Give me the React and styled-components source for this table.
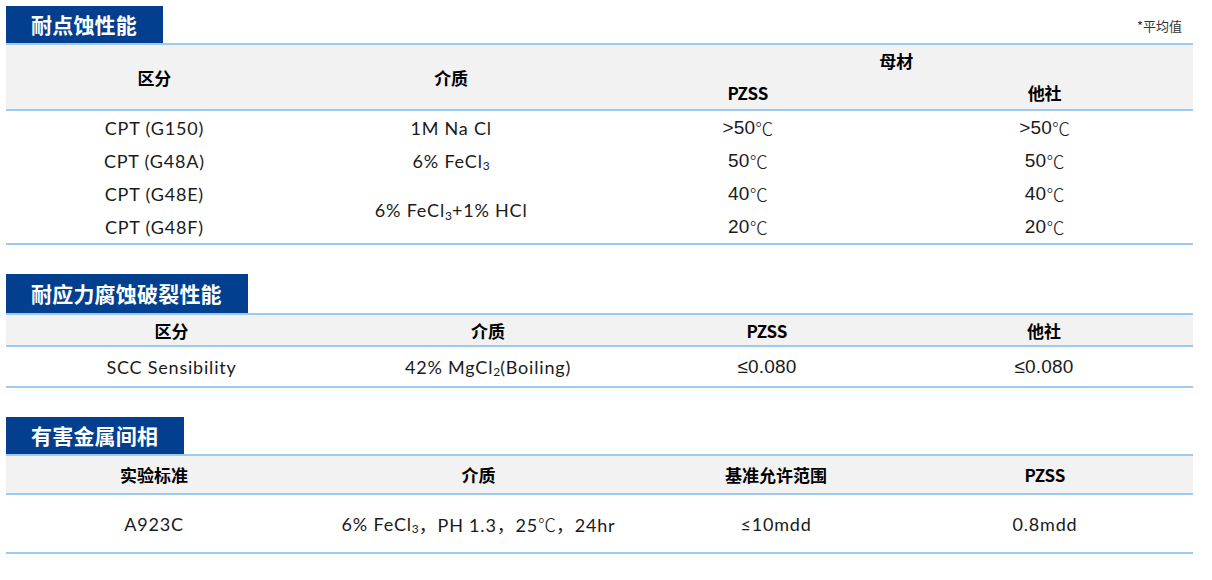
import React from "react";
import styled, { createGlobalStyle } from "styled-components";

const Global = createGlobalStyle`
  html, body { margin: 0; padding: 0; background: #ffffff; }
  body { font-family: "Lato", "Noto Sans CJK SC", sans-serif; color: #1a1a1a; }
`;

const LINE = "#9dcbef";
const BLUE = "#023f8f";
const CJK = `"Noto Sans CJK SC", "Noto Sans", sans-serif`;

const Page = styled.div`
  width: 1187px;
  padding: 6px 0 0 6px;
`;

const Section = styled.section`
  & + & { margin-top: 29px; }
`;

const TitleBar = styled.div`
  display: flex;
  justify-content: space-between;
  align-items: flex-end;
`;

const Title = styled.h2`
  margin: 0;
  height: ${(p) => p.$h}px;
  line-height: ${(p) => p.$h}px;
  padding: 0 26px 0 25px;
  background: ${BLUE};
  color: #ffffff;
  font-family: ${CJK};
  font-weight: 700;
  font-size: 21px;
  letter-spacing: 0.2px;
`;

const Note = styled.span`
  font-family: ${CJK};
  font-size: 13px;
  color: #333333;
  padding: 0 11px 8px 0;
`;

const Grid = styled.div`
  display: grid;
  grid-template-columns: ${(p) => p.$cols || "repeat(4, 1fr)"};
  grid-template-rows: ${(p) => p.$rows};
`;

const Head = styled(Grid)`
  background: #f2f2f2;
  border-top: 2px solid ${LINE};
  border-bottom: 2px solid ${LINE};
`;

const Body = styled(Grid)`
  border-bottom: 2px solid ${LINE};
`;

const Cell = styled.div`
  display: flex;
  align-items: center;
  justify-content: center;
  white-space: nowrap;
  grid-row: ${(p) => (p.$rowSpan ? `span ${p.$rowSpan}` : "auto")};
  grid-column: ${(p) => (p.$colSpan ? `span ${p.$colSpan}` : "auto")};
`;

const HeadCell = styled(Cell)`
  font-family: ${CJK};
  font-weight: 700;
  font-size: 17px;
  color: #000000;
`;

const DataCell = styled(Cell)`
  font-family: ${(p) => (p.$num ? `"Liberation Sans", ${CJK}` : `"Lato", ${CJK}`)};
  font-size: ${(p) => (p.$num ? "19px" : "18px")};
  color: #1a1a1a;
  letter-spacing: ${(p) => (p.$num ? "0.2px" : "0.8px")};
`;

const Deg = styled.span`
  font-family: ${CJK};
  font-weight: 300;
  font-size: 18px;
  letter-spacing: 0;
`;

const Sub = styled.span`
  font-size: 12px;
  position: relative;
  top: 5px;
  letter-spacing: 0;
`;

const C = () => <Deg>℃</Deg>;

const SCC_COLS = "331px 302px 256px 1fr";
const IMC_COLS = "296px 353px 242px 1fr";

export default function App() {
  return (
    <>
      <Global />
      <Page>
        <Section>
          <TitleBar>
            <Title $h={37}>耐点蚀性能</Title>
            <Note>*平均值</Note>
          </TitleBar>
          <Head $rows="31px 33px">
            <HeadCell $rowSpan={2}>区分</HeadCell>
            <HeadCell $rowSpan={2}>介质</HeadCell>
            <HeadCell $colSpan={2}>母材</HeadCell>
            <HeadCell>PZSS</HeadCell>
            <HeadCell>他社</HeadCell>
          </Head>
          <Body $rows="repeat(4, 33px)">
            <DataCell>CPT (G150)</DataCell>
            <DataCell>1M Na Cl</DataCell>
            <DataCell $num>&gt;50<C /></DataCell>
            <DataCell $num>&gt;50<C /></DataCell>
            <DataCell>CPT (G48A)</DataCell>
            <DataCell>6% FeCl<Sub>3</Sub></DataCell>
            <DataCell $num>50<C /></DataCell>
            <DataCell $num>50<C /></DataCell>
            <DataCell>CPT (G48E)</DataCell>
            <DataCell $rowSpan={2}>6% FeCl<Sub>3</Sub>+1% HCl</DataCell>
            <DataCell $num>40<C /></DataCell>
            <DataCell $num>40<C /></DataCell>
            <DataCell>CPT (G48F)</DataCell>
            <DataCell $num>20<C /></DataCell>
            <DataCell $num>20<C /></DataCell>
          </Body>
        </Section>

        <Section>
          <TitleBar>
            <Title $h={39}>耐应力腐蚀破裂性能</Title>
          </TitleBar>
          <Head $rows="30px" $cols={SCC_COLS}>
            <HeadCell>区分</HeadCell>
            <HeadCell>介质</HeadCell>
            <HeadCell>PZSS</HeadCell>
            <HeadCell>他社</HeadCell>
          </Head>
          <Body $rows="39px" $cols={SCC_COLS}>
            <DataCell>SCC Sensibility</DataCell>
            <DataCell>42% MgCl<Sub>2</Sub>(Boiling)</DataCell>
            <DataCell $num>≤0.080</DataCell>
            <DataCell $num>≤0.080</DataCell>
          </Body>
        </Section>

        <Section>
          <TitleBar>
            <Title $h={37}>有害金属间相</Title>
          </TitleBar>
          <Head $rows="37px" $cols={IMC_COLS}>
            <HeadCell>实验标准</HeadCell>
            <HeadCell>介质</HeadCell>
            <HeadCell>基准允许范围</HeadCell>
            <HeadCell>PZSS</HeadCell>
          </Head>
          <Body $rows="57px" $cols={IMC_COLS}>
            <DataCell>A923C</DataCell>
            <DataCell>6% FeCl<Sub>3</Sub>，PH 1.3，25<C />，24hr</DataCell>
            <DataCell>≤10mdd</DataCell>
            <DataCell>0.8mdd</DataCell>
          </Body>
        </Section>
      </Page>
    </>
  );
}
